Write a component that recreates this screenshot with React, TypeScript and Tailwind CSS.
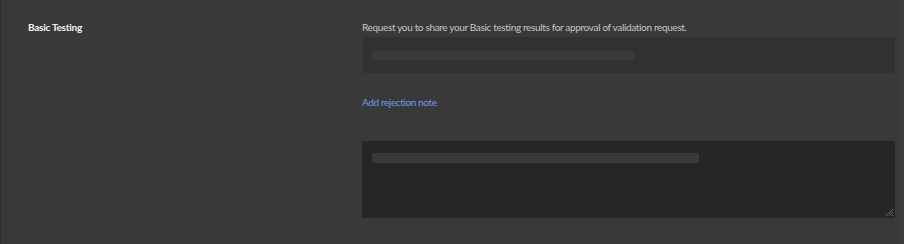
const App = () => {
  return (
    <div
      className="flex h-[244px] w-[904px] border-l border-r-[3px] border-l-[#2e2e2e] border-r-[#3d3d3d] bg-[#393939] text-[10px]"
      style={{ fontFamily: 'Lato, "Noto Sans", sans-serif' }}
    >
      <div className="w-[361px] shrink-0 pl-[27px] pt-[20px]">
        <h4 className="text-[10px] font-bold leading-[14px] tracking-[-0.25px] text-[#f4f4f4]">
          Basic Testing
        </h4>
      </div>
      <div className="flex w-[533px] flex-col pt-[20px]">
        <p className="leading-[14px] tracking-[-0.34px] text-[#c6c6c6]">
          Request you to share your Basic testing results for approval of validation request.
        </p>
        <div className="mt-[3px] flex h-[36px] items-center bg-[#313131] px-[10px]">
          <div className="h-[9px] w-[262px] rounded-[1px] bg-[#3a3a3a]" />
        </div>
        <button className="mt-[22px] self-start text-left leading-[14px] tracking-[-0.38px] text-[#6f9ae8]">
          Add rejection note
        </button>
        <div className="relative mt-[32px] h-[77px] bg-[#262626] px-[10px] pt-[12px]">
          <div className="h-[10px] w-[327px] rounded-[1px] bg-[#393939]" />
          <svg
            className="absolute bottom-[1px] right-[1px]"
            width="9"
            height="9"
            viewBox="0 0 9 9"
          >
            <path d="M8 1L1 8M8 4L4 8M8 7L7 8" stroke="#6a6a6a" strokeWidth="1" />
          </svg>
        </div>
      </div>
    </div>
  );
};

export default App;
